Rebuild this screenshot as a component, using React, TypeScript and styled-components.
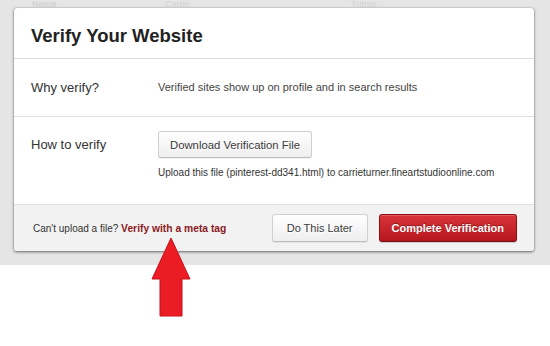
import React from "react";
import styled, { createGlobalStyle } from "styled-components";

const GlobalStyle = createGlobalStyle`
  html, body { margin: 0; padding: 0; background: #ffffff; }
  body { font-family: "Liberation Sans", Arial, Helvetica, sans-serif; }
`;

const Stage = styled.div`
  position: relative;
  width: 550px;
  height: 346px;
  overflow: hidden;
  background: #ffffff;
`;

const Page = styled.div`
  background: #e5e5e5;
  padding: 0 16px 14px 14px;
`;

const Backdrop = styled.div`
  height: 8px;
  display: grid;
  grid-template-columns: 133px 186px 1fr;
  align-items: end;
  padding-left: 18px;
`;

const BackdropText = styled.span<{ $bold?: boolean }>`
  font-size: 9px;
  line-height: 8px;
  font-weight: ${(p) => (p.$bold ? 700 : 400)};
  color: #d2d2d2;
`;

const Modal = styled.section`
  background: #ffffff;
  border-radius: 3px;
  overflow: hidden;
  box-shadow: 0 1px 3px rgba(0, 0, 0, 0.55), 0 0 1px rgba(0, 0, 0, 0.35);
`;

const Header = styled.header`
  padding: 17px 17px 11px;
  border-bottom: 1px solid #dcdcdc;
`;

const Title = styled.h1`
  margin: 0;
  font-size: 18.5px;
  line-height: 22px;
  font-weight: 700;
  color: #222222;
`;

const Row = styled.div<{ $pad: string }>`
  display: grid;
  grid-template-columns: 127px 1fr;
  padding: ${(p) => p.$pad};
  border-bottom: 1px solid #e0e0e0;
`;

const Label = styled.div`
  font-size: 13px;
  line-height: 27px;
  color: #333333;
`;

const BodyText = styled.p`
  margin: 0;
  font-size: 11px;
  line-height: 27px;
  color: #444444;
`;

const Stack = styled.div`
  display: flex;
  flex-direction: column;
  align-items: flex-start;
  gap: 8px;
`;

const Hint = styled.p`
  margin: 0;
  font-size: 10px;
  line-height: 14px;
  color: #333333;
`;

const Button = styled.button<{ $primary?: boolean; $h: number; $size: number; $padX: number }>`
  box-sizing: border-box;
  height: ${(p) => p.$h}px;
  padding: 0 ${(p) => p.$padX}px;
  font-family: "Liberation Sans", Arial, sans-serif;
  font-size: ${(p) => p.$size}px;
  font-weight: ${(p) => (p.$primary ? 700 : 400)};
  border-radius: 3px;
  cursor: pointer;
  white-space: nowrap;
  color: ${(p) => (p.$primary ? "#ffffff" : "#3a3a3a")};
  text-shadow: ${(p) => (p.$primary ? "0 -1px 0 rgba(0,0,0,0.35)" : "0 1px 0 #ffffff")};
  border: 1px solid ${(p) => (p.$primary ? "#8e1016" : "#cfcfcf")};
  border-bottom-color: ${(p) => (p.$primary ? "#7a0c11" : "#bdbdbd")};
  background: ${(p) =>
    p.$primary
      ? "linear-gradient(#d9343a, #b5161d)"
      : "linear-gradient(#ffffff, #eeeeee)"};
  box-shadow: ${(p) =>
    p.$primary
      ? "inset 0 1px 0 rgba(255,255,255,0.2), 0 1px 1px rgba(0,0,0,0.15)"
      : "inset 0 1px 0 #ffffff, 0 1px 1px rgba(0,0,0,0.06)"};
`;

const Footer = styled.footer`
  display: flex;
  align-items: center;
  gap: 11px;
  padding: 9px 17px 9px 19px;
  background: #f2f2f2;
`;

const FooterText = styled.p`
  flex: 1;
  margin: 0;
  font-size: 10px;
  color: #333333;
`;

const MetaLink = styled.a`
  font-size: 10.3px;
  font-weight: 700;
  color: #8c1a22;
  text-decoration: none;
`;

const Arrow = styled.svg`
  position: absolute;
  left: 150px;
  top: 236px;
  width: 42px;
  height: 82px;
`;

export default function App() {
  return (
    <Stage>
      <GlobalStyle />
      <Page>
        <Backdrop>
          <BackdropText $bold>Name</BackdropText>
          <BackdropText>Carrie</BackdropText>
          <BackdropText>Turner</BackdropText>
        </Backdrop>
        <Modal>
          <Header>
            <Title>Verify Your Website</Title>
          </Header>
          <Row $pad="15px 17px">
            <Label>Why verify?</Label>
            <BodyText>Verified sites show up on profile and in search results</BodyText>
          </Row>
          <Row $pad="14px 17px 24px">
            <Label>How to verify</Label>
            <Stack>
              <Button $h={27} $size={11.3} $padX={11}>Download Verification File</Button>
              <Hint>Upload this file (pinterest-dd341.html) to carrieturner.fineartstudioonline.com</Hint>
            </Stack>
          </Row>
          <Footer>
            <FooterText>
              Can't upload a file? <MetaLink href="#">Verify with a meta tag</MetaLink>
            </FooterText>
            <Button $h={28} $size={11} $padX={14}>Do This Later</Button>
            <Button $primary $h={28} $size={11} $padX={12}>Complete Verification</Button>
          </Footer>
        </Modal>
      </Page>
      <Arrow viewBox="0 0 42 82">
        <path
          d="M21 2 L40 43 L32 43 L32 80 L10 80 L10 43 L2 43 Z"
          fill="#ec1c24"
          stroke="#c5121b"
          strokeWidth="1"
          strokeLinejoin="round"
        />
      </Arrow>
    </Stage>
  );
}
